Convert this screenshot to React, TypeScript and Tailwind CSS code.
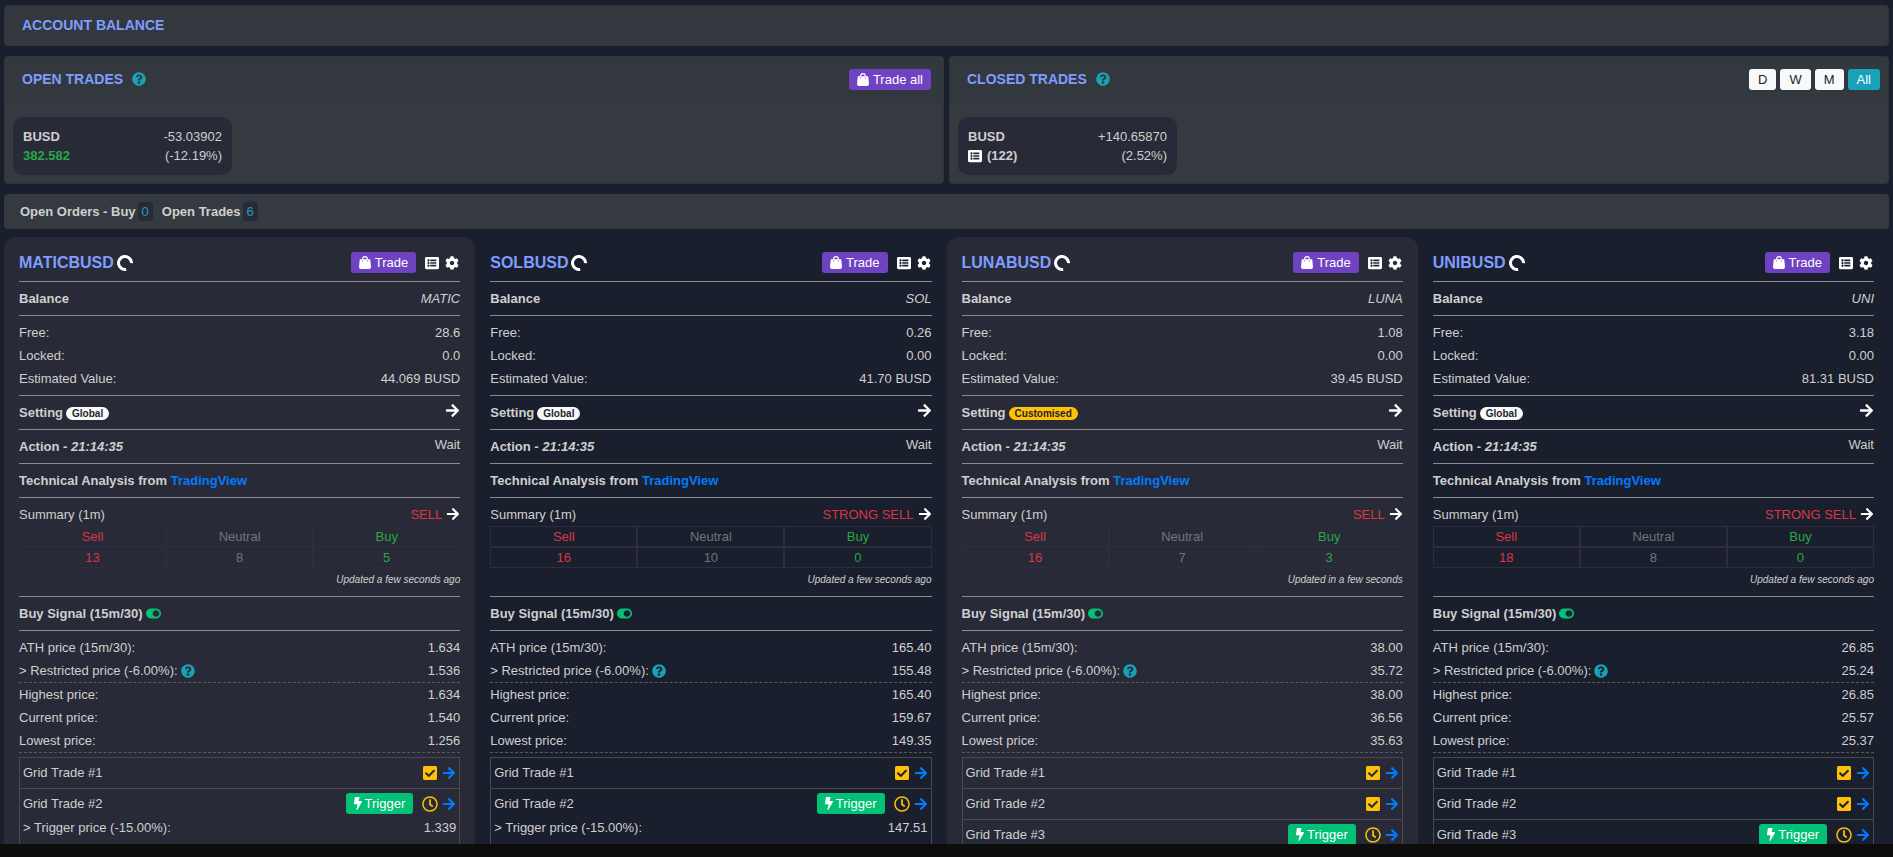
import { useState } from 'react';
import type { ReactNode } from 'react';
import clsx from 'clsx';
import {
  FaArrowRight,
  FaBolt,
  FaCheckSquare,
  FaCog,
  FaListAlt,
  FaQuestionCircle,
  FaRegClock,
  FaToggleOn,
} from 'react-icons/fa';

type GridTrade = { done: boolean; trigger?: [string, string] };

type Coin = {
  asset: string;
  free: string;
  locked: string;
  value: string;
  setting: 'Global' | 'Customised';
  summary: string;
  votes: [number, number, number];
  updated: string;
  ath: string;
  restricted: string;
  highest: string;
  current: string;
  lowest: string;
  grid: GridTrade[];
};

const coins: Coin[] = [
  {
    asset: 'MATIC',
    free: '28.6',
    locked: '0.0',
    value: '44.069',
    setting: 'Global',
    summary: 'SELL',
    votes: [13, 8, 5],
    updated: 'Updated a few seconds ago',
    ath: '1.634',
    restricted: '1.536',
    highest: '1.634',
    current: '1.540',
    lowest: '1.256',
    grid: [{ done: true }, { done: false, trigger: ['-15.00%', '1.339'] }],
  },
  {
    asset: 'SOL',
    free: '0.26',
    locked: '0.00',
    value: '41.70',
    setting: 'Global',
    summary: 'STRONG SELL',
    votes: [16, 10, 0],
    updated: 'Updated a few seconds ago',
    ath: '165.40',
    restricted: '155.48',
    highest: '165.40',
    current: '159.67',
    lowest: '149.35',
    grid: [{ done: true }, { done: false, trigger: ['-15.00%', '147.51'] }],
  },
  {
    asset: 'LUNA',
    free: '1.08',
    locked: '0.00',
    value: '39.45',
    setting: 'Customised',
    summary: 'SELL',
    votes: [16, 7, 3],
    updated: 'Updated in a few seconds',
    ath: '38.00',
    restricted: '35.72',
    highest: '38.00',
    current: '36.56',
    lowest: '35.63',
    grid: [{ done: true }, { done: true }, { done: false }],
  },
  {
    asset: 'UNI',
    free: '3.18',
    locked: '0.00',
    value: '81.31',
    setting: 'Global',
    summary: 'STRONG SELL',
    votes: [18, 8, 0],
    updated: 'Updated a few seconds ago',
    ath: '26.85',
    restricted: '25.24',
    highest: '26.85',
    current: '25.57',
    lowest: '25.37',
    grid: [{ done: true }, { done: true }, { done: false }],
  },
];

const periods = ['D', 'W', 'M', 'All'];

function HelpButton() {
  return (
    <button aria-label="Help" className="text-[14px] text-[#17a2b8]">
      <FaQuestionCircle />
    </button>
  );
}

function BagIcon() {
  return (
    <svg viewBox="0 0 36 39" className="h-[13px] w-3" fill="none" aria-hidden="true">
      <path d="M11 13V9a7 7 0 0 1 14 0v4" stroke="currentColor" strokeWidth="3.5" />
      <path
        fillRule="evenodd"
        d="M4 10h28a2 2 0 0 1 2 2l2 21a6 6 0 0 1-6 6H6a6 6 0 0 1-6-6l2-21a2 2 0 0 1 2-2zm7 3a1.6 1.6 0 1 0 .01 0zm14 0a1.6 1.6 0 1 0 .01 0z"
        fill="currentColor"
      />
    </svg>
  );
}

function TradeButton({ children }: { children: ReactNode }) {
  return (
    <button className="flex h-[21px] items-center gap-1 rounded-[3px] bg-[#6f42c1] px-2 text-white">
      <BagIcon />
      {children}
    </button>
  );
}

function Spinner() {
  return (
    <svg viewBox="0 0 16 16" className="size-4" fill="none" aria-hidden="true">
      <circle
        cx="8"
        cy="8"
        r="6.5"
        stroke="#fff"
        strokeWidth="3"
        strokeDasharray="31.2 9.7"
        transform="rotate(80 8 8)"
      />
    </svg>
  );
}

function Panel({ title, actions, children }: { title: string; actions: ReactNode; children: ReactNode }) {
  return (
    <section className="flex-1 rounded-[4px] border border-[#2f3438] bg-[#343a40]">
      <header className="flex h-[45px] items-center border-b border-[#2f3438] bg-[#33383e] pl-[17px]">
        <h2 className="mr-[9px] text-[14px] font-bold text-[#7f9cff]">{title}</h2>
        <HelpButton />
        <div className="ml-auto">{actions}</div>
      </header>
      <div className="px-2 pt-[15px] pb-2">{children}</div>
    </section>
  );
}

function ProfitBox({ left, amount, percent }: { left: ReactNode; amount: string; percent: string }) {
  return (
    <div className="flex w-[219px] justify-between rounded-[10px] bg-[#282b37] p-[10px] leading-[19px]">
      <div className="font-bold">
        <div>BUSD</div>
        {left}
      </div>
      <div className="text-right">
        <div>{amount}</div>
        <div>{percent}</div>
      </div>
    </div>
  );
}

function Count({ label, value }: { label: string; value: number }) {
  return (
    <div className="flex items-center gap-[2px]">
      <span className="font-bold">{label}</span>
      <span className="rounded-[3px] bg-[#282b37] px-1 leading-[19px] text-[#17a2b8]">{value}</span>
    </div>
  );
}

function Section({ children }: { children: ReactNode }) {
  return <div className="border-t border-[#8b8c90] py-[5px]">{children}</div>;
}

function Row({ label, children }: { label: ReactNode; children?: ReactNode }) {
  return (
    <div className="flex h-[23px] items-center justify-between">
      <div className="flex items-center gap-[3px]">{label}</div>
      {children}
    </div>
  );
}

function GridItem({ index, trade }: { index: number; trade: GridTrade }) {
  return (
    <div className="border-b border-[#4a4a4c] px-[3px] pt-[3px] pb-1 last:border-b-0 last:pb-12">
      <div className="flex h-[23px] items-center gap-1">
        <span className="mr-auto">Grid Trade #{index}</span>
        {!trade.done && (
          <button className="mr-[5px] flex h-[21px] items-center gap-[3px] rounded-[3px] bg-[#02c076] px-2 text-white">
            <FaBolt className="w-2" />
            Trigger
          </button>
        )}
        {trade.done ? (
          <FaCheckSquare className="text-[16px] text-[#ffc107]" />
        ) : (
          <FaRegClock className="text-[16px] text-[#ffc107]" />
        )}
        <button aria-label={`Show grid trade ${index}`} className="text-[14px] text-[#007bff]">
          <FaArrowRight />
        </button>
      </div>
      {trade.trigger && (
        <div className="pt-px">
          <Row label={`> Trigger price (${trade.trigger[0]}):`}>
            <span>{trade.trigger[1]}</span>
          </Row>
        </div>
      )}
    </div>
  );
}

function CoinCard({ coin }: { coin: Coin }) {
  return (
    <article className="rounded-[12px] p-[15px] odd:bg-[#282b37]">
      <header className="mb-2 flex h-[21px] items-center">
        <h3 className="mr-[3px] text-[16px] font-bold text-[#7f9cff]">{coin.asset}BUSD</h3>
        <Spinner />
        <div className="ml-auto flex items-center gap-[6px] pr-px text-[14px] text-white">
          <div className="mr-[3px] text-[13px]">
            <TradeButton>Trade</TradeButton>
          </div>
          <button aria-label="Grid trade history">
            <FaListAlt />
          </button>
          <button aria-label="Settings">
            <FaCog />
          </button>
        </div>
      </header>

      <Section>
        <Row label={<b>Balance</b>}>
          <i>{coin.asset}</i>
        </Row>
      </Section>
      <Section>
        <Row label="Free:">
          <span>{coin.free}</span>
        </Row>
        <Row label="Locked:">
          <span>{coin.locked}</span>
        </Row>
        <Row label="Estimated Value:">
          <span>{coin.value} BUSD</span>
        </Row>
      </Section>
      <Section>
        <Row
          label={
            <>
              <b>Setting</b>
              <span
                className={clsx(
                  'mt-[2px] rounded-full px-[6px] text-[10px] leading-[13px] font-bold text-[#212529]',
                  coin.setting === 'Global' ? 'bg-[#f8f9fa]' : 'bg-[#ffc107]'
                )}
              >
                {coin.setting}
              </span>
            </>
          }
        >
          <button aria-label="Show setting" className="pb-1 text-[15px] text-white">
            <FaArrowRight />
          </button>
        </Row>
      </Section>
      <Section>
        <Row
          label={
            <b>
              Action - <i>21:14:35</i>
            </b>
          }
        >
          <span className="pb-1">Wait</span>
        </Row>
      </Section>
      <Section>
        <Row
          label={
            <b>
              Technical Analysis from{' '}
              <a href="#tradingview" className="text-[#007bff]">
                TradingView
              </a>
            </b>
          }
        />
      </Section>
      <Section>
        <Row label="Summary (1m)">
          <div className="flex items-center gap-1 text-[#dc3545]">
            {coin.summary}
            <button aria-label="Show analysis" className="pb-px text-[14px] text-white">
              <FaArrowRight />
            </button>
          </div>
        </Row>
        <table className="w-full table-fixed border-separate border-spacing-0 text-center">
          <thead>
            <tr className="*:h-[21px] *:border *:border-[#2e2d40] *:font-normal *:leading-[19px]">
              <th className="text-[#dc3545]">Sell</th>
              <th className="text-[#6c757d]">Neutral</th>
              <th className="text-[#28a745]">Buy</th>
            </tr>
          </thead>
          <tbody>
            <tr className="*:h-[21px] *:border *:border-[#2e2d40] *:leading-[19px]">
              <td className="text-[#dc3545]">{coin.votes[0]}</td>
              <td className="text-[#6c757d]">{coin.votes[1]}</td>
              <td className="text-[#28a745]">{coin.votes[2]}</td>
            </tr>
          </tbody>
        </table>
        <p className="text-right text-[10px] leading-[23px] italic">{coin.updated}</p>
      </Section>
      <Section>
        <Row
          label={
            <>
              <b>Buy Signal (15m/30)</b>
              <FaToggleOn className="text-[15px] text-[#02c076]" />
            </>
          }
        />
      </Section>
      <Section>
        <Row label="ATH price (15m/30):">
          <span>{coin.ath}</span>
        </Row>
        <Row
          label={
            <>
              <span>&gt; Restricted price (-6.00%):</span>
              <HelpButton />
            </>
          }
        >
          <span>{coin.restricted}</span>
        </Row>
        <div className="mb-1 border-y border-dashed border-[#5a5b5f]">
          <Row label="Highest price:">
            <span>{coin.highest}</span>
          </Row>
          <Row label="Current price:">
            <span>{coin.current}</span>
          </Row>
          <Row label="Lowest price:">
            <span>{coin.lowest}</span>
          </Row>
        </div>
        <div className="border border-[#4a4a4c]">
          {coin.grid.map((trade, i) => (
            <GridItem key={i} index={i + 1} trade={trade} />
          ))}
        </div>
      </Section>
    </article>
  );
}

export default function App() {
  const [period, setPeriod] = useState('All');

  return (
    <div className="flex h-screen flex-col bg-[#1a1f2d] font-['Liberation_Sans',Arial,sans-serif] text-[13px] leading-[19px] text-[#cfcfcf]">
      <main className="min-h-0 flex-1 overflow-hidden px-1 pt-[5px]">
        <section className="mb-[10px] flex h-[41px] items-center rounded-[4px] border border-[#2f3438] bg-[#33383e] px-[17px]">
          <h2 className="text-[14px] font-bold text-[#7f9cff]">ACCOUNT BALANCE</h2>
        </section>

        <div className="mb-[10px] flex gap-[5px]">
          <Panel
            title="OPEN TRADES"
            actions={
              <div className="pr-3">
                <TradeButton>Trade all</TradeButton>
              </div>
            }
          >
            <ProfitBox
              left={<div className="text-[#28a745]">382.582</div>}
              amount="-53.03902"
              percent="(-12.19%)"
            />
          </Panel>
          <Panel
            title="CLOSED TRADES"
            actions={
              <div className="flex gap-1 pr-2">
                {periods.map((p) => (
                  <button
                    key={p}
                    onClick={() => setPeriod(p)}
                    className={clsx(
                      'h-[21px] rounded-[3px] px-[9px]',
                      p === period ? 'bg-[#17a2b8] text-white' : 'bg-[#f8f9fa] text-[#212529]'
                    )}
                  >
                    {p}
                  </button>
                ))}
              </div>
            }
          >
            <ProfitBox
              left={
                <div className="flex items-center gap-[5px]">
                  <button aria-label="Closed trades" className="text-[14px] text-white">
                    <FaListAlt />
                  </button>
                  (122)
                </div>
              }
              amount="+140.65870"
              percent="(2.52%)"
            />
          </Panel>
        </div>

        <section className="mb-2 flex h-[35px] items-center gap-[9px] rounded-[4px] bg-[#343a40] px-4">
          <Count label="Open Orders - Buy" value={0} />
          <Count label="Open Trades" value={6} />
        </section>

        <div className="grid grid-cols-4">
          {coins.map((coin) => (
            <CoinCard key={coin.asset} coin={coin} />
          ))}
        </div>
      </main>
      <footer className="h-[13px] bg-[#0d0d0d]" />
    </div>
  );
}
